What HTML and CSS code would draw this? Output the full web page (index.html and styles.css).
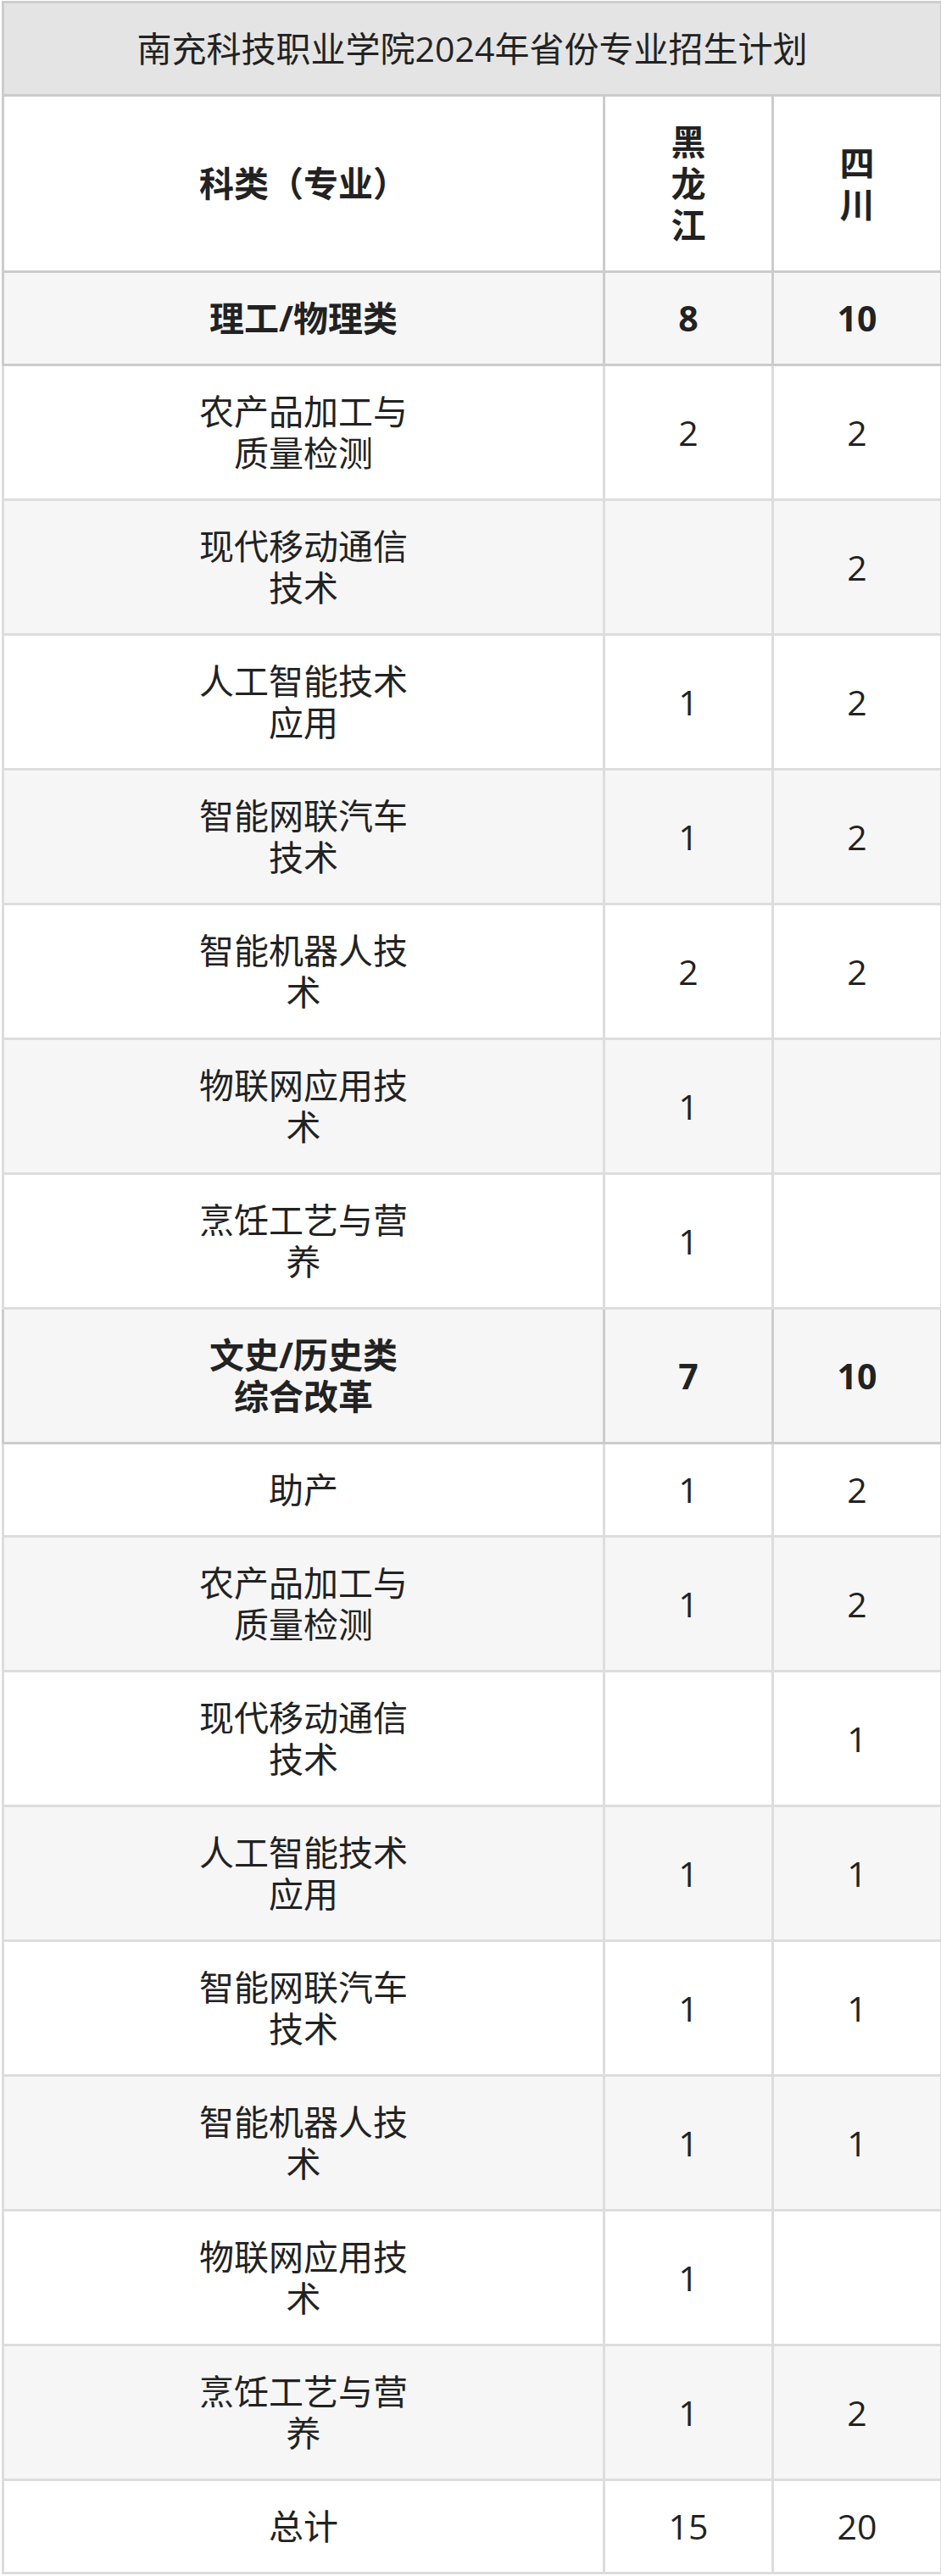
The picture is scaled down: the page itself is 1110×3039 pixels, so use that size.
FILE: index.html
```html
<!DOCTYPE html>
<html lang="zh-CN">
<head>
<meta charset="utf-8">
<title>南充科技职业学院2024年省份专业招生计划</title>
<link rel="stylesheet" href="styles.css">
</head>
<body>
<table class="plan">
  <colgroup>
    <col class="col-major">
    <col class="col-prov">
    <col class="col-prov2">
  </colgroup>
  <thead>
    <tr class="title-row">
      <th colspan="3" class="title">南充科技职业学院2024年省份专业招生计划</th>
    </tr>
    <tr class="head-row">
      <th class="bold">科类（专业）</th>
      <th class="bold">黑<br>龙<br>江</th>
      <th class="bold">四<br>川</th>
    </tr>
  </thead>
  <tbody>
    <tr class="cat"><th>理工/物理类</th><th>8</th><th>10</th></tr>
    <tr class="w"><td>农产品加工与<br>质量检测</td><td>2</td><td>2</td></tr>
    <tr class="g"><td>现代移动通信<br>技术</td><td></td><td>2</td></tr>
    <tr class="w"><td>人工智能技术<br>应用</td><td>1</td><td>2</td></tr>
    <tr class="g"><td>智能网联汽车<br>技术</td><td>1</td><td>2</td></tr>
    <tr class="w"><td>智能机器人技<br>术</td><td>2</td><td>2</td></tr>
    <tr class="g"><td>物联网应用技<br>术</td><td>1</td><td></td></tr>
    <tr class="w"><td>烹饪工艺与营<br>养</td><td>1</td><td></td></tr>
    <tr class="cat"><th>文史/历史类<br>综合改革</th><th>7</th><th>10</th></tr>
    <tr class="w"><td>助产</td><td>1</td><td>2</td></tr>
    <tr class="g"><td>农产品加工与<br>质量检测</td><td>1</td><td>2</td></tr>
    <tr class="w"><td>现代移动通信<br>技术</td><td></td><td>1</td></tr>
    <tr class="g"><td>人工智能技术<br>应用</td><td>1</td><td>1</td></tr>
    <tr class="w"><td>智能网联汽车<br>技术</td><td>1</td><td>1</td></tr>
    <tr class="g"><td>智能机器人技<br>术</td><td>1</td><td>1</td></tr>
    <tr class="w"><td>物联网应用技<br>术</td><td>1</td><td></td></tr>
    <tr class="g"><td>烹饪工艺与营<br>养</td><td>1</td><td>2</td></tr>
    <tr class="w"><td>总计</td><td>15</td><td>20</td></tr>
  </tbody>
</table>
</body>
</html>
```
FILE: styles.css
```css
html, body {
  margin: 0;
  padding: 0;
  background: #ffffff;
}

body {
  padding: 1px 1px 0 2px;
  font-family: "Open Sans", "Noto Sans CJK SC", sans-serif;
  color: #222222;
}

.plan {
  width: 1107px;
  border-collapse: collapse;
  table-layout: fixed;
  font-size: 41px;
  line-height: 49px;
}

.col-major { width: 709px; }
.col-prov { width: 199px; }
.col-prov2 { width: 199px; }

.plan th,
.plan td {
  padding: 29px 6px;
  text-align: center;
  vertical-align: middle;
}

.plan th {
  border: 3px solid #cccccc;
  font-weight: 700;
}

.plan td {
  border: 3px solid #dddddd;
  font-weight: 400;
}

.title-row th.title {
  background: #e4e4e4;
  font-weight: 400;
}

.head-row th {
  background: #ffffff;
}

.cat th {
  background: #f6f6f6;
}

.w td {
  background: #ffffff;
}

.g td {
  background: #f6f6f6;
}
```
